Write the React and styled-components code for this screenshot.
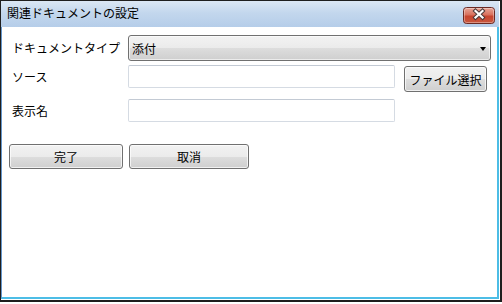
import React from 'react';
import styled, { createGlobalStyle } from 'styled-components';

const GlobalStyle = createGlobalStyle`
    html, body {
        margin: 0;
        padding: 0;
        background: #fff;
    }
    body {
        font-family: "Noto Sans CJK JP", "Noto Sans", sans-serif;
        font-size: 12px;
        color: #000;
    }
`;

const Window = styled.div`
    box-sizing: border-box;
    width: 502px;
    height: 302px;
    display: flex;
    flex-direction: column;
    border: 1px solid #1e1e1e;
    border-right-width: 2px;
    border-bottom-width: 2px;
    padding: 0 1px 1px 0;
    background: #fff;
`;

const TitleBar = styled.div`
    height: 26px;
    flex: none;
    display: flex;
    align-items: flex-start;
    justify-content: space-between;
    background: linear-gradient(to bottom, #dbe7f4 0%, #c3d7ed 45%, #b5cde9 100%);
`;

const Title = styled.div`
    padding-left: 6px;
    line-height: 24px;
    white-space: nowrap;
`;

const CloseButton = styled.div`
    width: 32px;
    height: 17px;
    margin: 6px 4px 0 0;
    line-height: 0;
`;

const Client = styled.div`
    flex: 1;
    box-sizing: border-box;
    border-left: 1px solid #6597cc;
    border-right: 2px solid #4cbde6;
    border-bottom: 2px solid #4cbde6;
    padding: 8px 0 0 7px;
    background: #fff;
`;

const Row = styled.div`
    display: flex;
    align-items: ${p => p.$top ? 'flex-start' : 'center'};
    margin-top: ${p => p.$gap || 0}px;
`;

const Label = styled.div`
    box-sizing: border-box;
    width: 119px;
    padding-left: 3px;
    line-height: ${p => p.$h || 23}px;
    white-space: nowrap;
`;

const Select = styled.div`
    box-sizing: border-box;
    width: 363px;
    height: 26px;
    display: flex;
    align-items: center;
    justify-content: space-between;
    padding: 0 4px 0 3px;
    border: 1px solid #707070;
    border-radius: 3px;
    background: linear-gradient(to bottom, #f2f2f2 0%, #ebebeb 50%, #dddddd 51%, #cfcfcf 100%);
    box-shadow: inset 0 0 0 1px rgba(255, 255, 255, 0.6);
`;

const Arrow = styled.span`
    width: 0;
    height: 0;
    border-left: 3.5px solid transparent;
    border-right: 3.5px solid transparent;
    border-top: 4px solid #000;
    margin-top: 1px;
`;

const Input = styled.div`
    box-sizing: border-box;
    width: 267px;
    height: 23px;
    border: 1px solid #d5dbe3;
    border-top-color: #c3cad4;
    border-radius: 2px;
    background: #fff;
`;

const Button = styled.div`
    box-sizing: border-box;
    width: ${p => p.$w}px;
    height: ${p => p.$h || 25}px;
    margin-left: ${p => p.$ml || 0}px;
    margin-top: ${p => p.$mt || 0}px;
    display: flex;
    align-items: center;
    justify-content: center;
    border: 1px solid #707070;
    border-radius: 3px;
    background: linear-gradient(to bottom, #f2f2f2 0%, #ebebeb 50%, #dddddd 51%, #cfcfcf 100%);
    box-shadow: inset 0 0 0 1px rgba(255, 255, 255, 0.7);
    white-space: nowrap;
`;

const CloseIcon = () => (
    <svg width="32" height="17" viewBox="0 0 32 17">
        <defs>
            <linearGradient id="closeRed" x1="0" y1="0" x2="0" y2="1">
                <stop offset="0" stopColor="#e9a99b" />
                <stop offset="0.45" stopColor="#d8715e" />
                <stop offset="0.55" stopColor="#c7452f" />
                <stop offset="1" stopColor="#c9583f" />
            </linearGradient>
        </defs>
        <rect x="0.5" y="0.5" width="31" height="16" rx="3" fill="url(#closeRed)" stroke="#6b2a24" />
        <rect x="1.5" y="1.5" width="29" height="14" rx="2" fill="none" stroke="rgba(255,255,255,0.35)" />
        <g strokeLinecap="square">
            <path d="M12.5 4 L19.5 10.5 M19.5 4 L12.5 10.5" stroke="#4a3a3a" strokeWidth="4.2" />
            <path d="M12.5 4 L19.5 10.5 M19.5 4 L12.5 10.5" stroke="#fff" strokeWidth="2.2" />
        </g>
    </svg>
);

const App = () => (
    <>
        <GlobalStyle />
        <Window>
            <TitleBar>
                <Title>関連ドキュメントの設定</Title>
                <CloseButton><CloseIcon /></CloseButton>
            </TitleBar>
            <Client>
                <Row>
                    <Label $h={24}>ドキュメントタイプ</Label>
                    <Select>
                        <span>添付</span>
                        <Arrow />
                    </Select>
                </Row>
                <Row $top $gap={4}>
                    <Label>ソース</Label>
                    <Input />
                    <Button $w={83} $h={26} $ml={9} $mt={1}>ファイル選択</Button>
                </Row>
                <Row $gap={7}>
                    <Label>表示名</Label>
                    <Input />
                </Row>
                <Row $gap={22}>
                    <Button $w={114}>完了</Button>
                    <Button $w={120} $ml={6}>取消</Button>
                </Row>
            </Client>
        </Window>
    </>
);

export default App;
